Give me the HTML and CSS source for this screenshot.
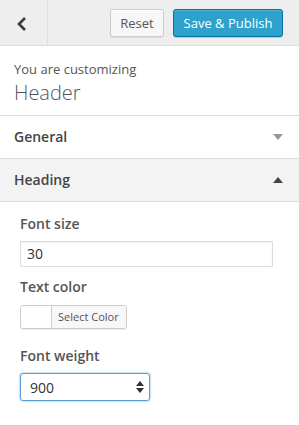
FILE: index.html
```html
<!DOCTYPE html>
<html>
<head>
<meta charset="utf-8">
<link rel="stylesheet" href="styles.css">
</head>
<body>
<div class="topbar">
  <div class="back">
    <svg width="12" height="16" viewBox="0 0 12 16"><polyline points="9,2 3,8 9,14" fill="none" stroke="#3c3c3c" stroke-width="2.6"/></svg>
  </div>
  <div class="actions">
    <button class="btn btn-reset">Reset</button>
    <button class="btn btn-primary">Save &amp; Publish</button>
  </div>
</div>
<div class="info">
  <div class="info-sub">You are customizing</div>
  <div class="info-title">Header</div>
</div>
<div class="section">
  <span>General</span>
  <span class="arrow down"></span>
</div>
<div class="section open">
  <span>Heading</span>
  <span class="arrow up"></span>
</div>
<div class="controls">
  <div class="control">
    <div class="label">Font size</div>
    <div class="input">30</div>
  </div>
  <div class="control">
    <div class="label">Text color</div>
    <div class="color-btn"><span class="swatch"></span><span class="color-text">Select Color</span></div>
  </div>
  <div class="control control-last">
    <div class="label">Font weight</div>
    <div class="select"><span>900</span>
      <svg width="8" height="14" viewBox="0 0 8 14"><polygon points="4,1 8,6 0,6" fill="#333"/><polygon points="0,8 8,8 4,13" fill="#333"/></svg>
    </div>
  </div>
</div>
</body>
</html>
```
FILE: styles.css
```css
* { box-sizing: border-box; }
body {
  margin: 0;
  font-family: "Open Sans", sans-serif;
  color: #555;
  background: #fff;
  width: 299px;
}
.topbar {
  height: 46px;
  background: #eee;
  border-bottom: 1px solid #ddd;
  display: flex;
  align-items: stretch;
}
.back {
  width: 48px;
  border-right: 1px solid #ddd;
  display: flex;
  align-items: center;
  justify-content: center;
  padding-right: 3px;
  padding-top: 2px;
}
.actions {
  flex: 1;
  display: flex;
  justify-content: flex-end;
  align-items: flex-start;
  gap: 9px;
  padding: 9px 16px 0 0;
}
.btn {
  font-family: "Open Sans", sans-serif;
  font-size: 13px;
  height: 28px;
  border-radius: 3px;
  padding: 0;
  line-height: 26px;
  margin: 0;
}
.btn-reset {
  background: #f7f7f7;
  border: 1px solid #ccc;
  color: #555;
  width: 54px;
  box-shadow: 0 1px 0 #fff inset, 0 1px 0 rgba(0,0,0,.08);
}
.btn-primary {
  background: #2ea2cc;
  border: 1px solid #0074a2;
  color: #fff;
  font-weight: 400;
  width: 110px;
  box-shadow: inset 0 1px 0 rgba(120,200,230,.5), 0 1px 0 rgba(0,0,0,.15);
}
.info {
  height: 70px;
  border-bottom: 1px solid #ddd;
  padding: 13px 14px 0;
}
.info-sub {
  font-size: 13px;
  line-height: 20px;
}
.info-title {
  font-size: 20px;
  font-weight: 300;
  line-height: 26px;
  margin-top: 1px;
}
.section {
  height: 43px;
  border-bottom: 1px solid #ddd;
  display: flex;
  align-items: center;
  justify-content: space-between;
  padding: 0 16px 1px 14px;
  font-size: 14px;
  font-weight: 600;
  color: #444;
}
.section.open {
  background: #f3f3f3;
}
.arrow {
  width: 0;
  height: 0;
  border-left: 5px solid transparent;
  border-right: 5px solid transparent;
}
.arrow.down {
  border-top: 6px solid #999;
}
.arrow.up {
  border-bottom: 6px solid #444;
}
.controls {
  padding: 11px 26px 0 20px;
}
.control {
  margin-bottom: 9px;
}
.control-last {
  margin-top: 12px;
}
.label {
  font-size: 14px;
  font-weight: 600;
  line-height: 22px;
  margin-bottom: 6px;
}
.input {
  height: 26px;
  border: 1px solid #ddd;
  box-shadow: inset 0 1px 2px rgba(0,0,0,.07);
  font-size: 14px;
  line-height: 24px;
  padding: 0 6px;
  color: #333;
}
.color-btn {
  display: inline-flex;
  height: 24px;
  border: 1px solid #ccc;
  border-radius: 3px;
  overflow: hidden;
  box-shadow: 0 1px 0 rgba(0,0,0,.08);
  margin-top: 1px;
}
.swatch {
  width: 31px;
  background: #fff;
  border-right: 1px solid #ccc;
}
.color-text {
  background: #f7f7f7;
  font-size: 11px;
  line-height: 22px;
  padding: 0 7px 0 6px;
}
.select {
  width: 130px;
  height: 28px;
  border: 1px solid #5b9dd9;
  border-radius: 3px;
  box-shadow: 0 0 2px rgba(30,140,190,.8);
  display: flex;
  align-items: center;
  justify-content: space-between;
  padding: 0 5px 0 9px;
  font-size: 14px;
  color: #333;
  margin-top: 1px;
}
```
